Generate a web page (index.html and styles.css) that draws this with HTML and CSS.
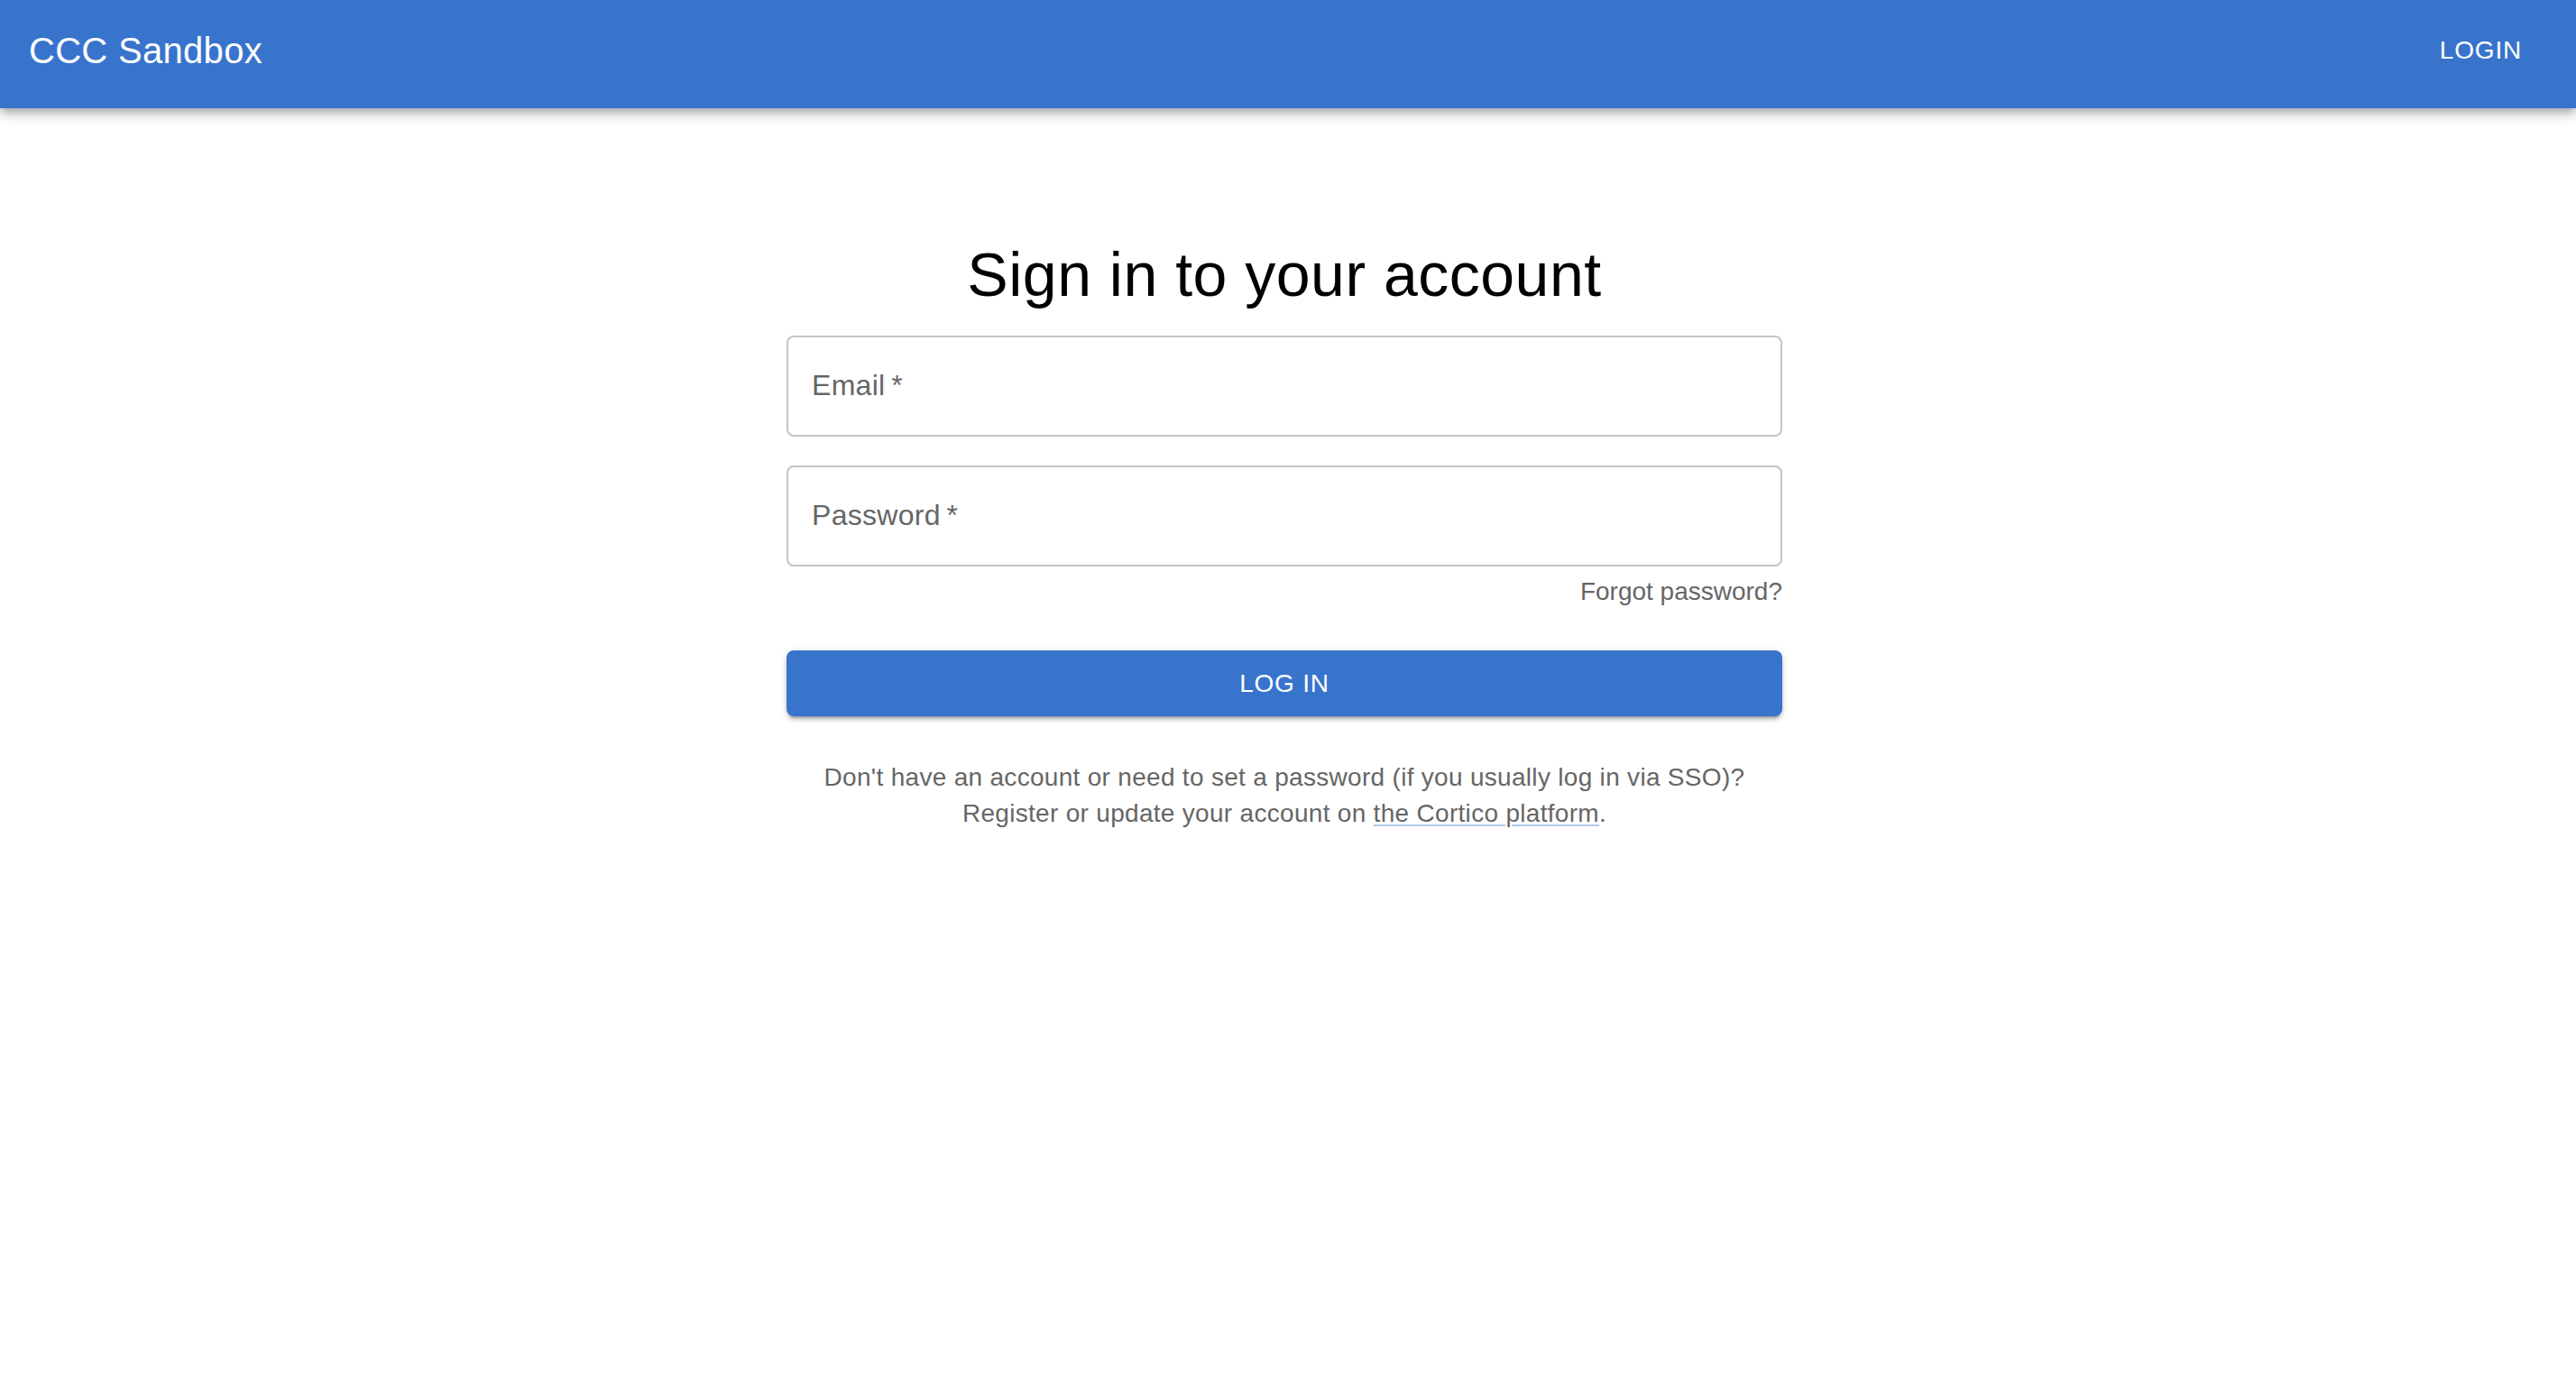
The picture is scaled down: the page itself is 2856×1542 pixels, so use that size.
FILE: index.html
```html
<!DOCTYPE html>
<html lang="en">
<head>
<meta charset="utf-8">
<title>CCC Sandbox</title>
<link rel="stylesheet" href="styles.css">
</head>
<body>
<header class="appbar">
  <div class="brand">CCC Sandbox</div>
  <a class="nav-login" href="#">LOGIN</a>
</header>
<main class="main">
  <form class="signin">
    <h1 class="title">Sign in to your account</h1>
    <div class="field field-email">
      <label class="field-label">Email&thinsp;*</label>
    </div>
    <div class="field field-password">
      <label class="field-label">Password&thinsp;*</label>
    </div>
    <div class="forgot-row"><a class="forgot" href="#">Forgot password?</a></div>
    <button class="submit" type="button">LOG IN</button>
    <p class="note">Don't have an account or need to set a password (if you usually log in via SSO)?<br>Register or update your account on <a class="note-link" href="#">the Cortico platform</a>.</p>
  </form>
</main>
</body>
</html>
```

FILE: styles.css
```css
html, body {
  margin: 0;
  padding: 0;
  background: #ffffff;
}

body {
  font-family: "Liberation Sans", Arial, Helvetica, sans-serif;
  color: #000;
}

.appbar {
  box-sizing: border-box;
  height: 120px;
  padding: 0 60px 8px 32px;
  background: #3874cc;
  color: #ffffff;
  display: flex;
  align-items: center;
  justify-content: space-between;
  box-shadow: 0 4px 8px -2px rgba(0,0,0,0.2), 0 8px 10px 0 rgba(0,0,0,0.14), 0 2px 20px 0 rgba(0,0,0,0.12);
  position: relative;
  z-index: 2;
}

.brand {
  font-size: 40px;
  line-height: normal;
  letter-spacing: 0.3px;
}

.nav-login {
  color: #ffffff;
  text-decoration: none;
  font-size: 28px;
  letter-spacing: 0.8px;
  line-height: normal;
}

.main {
  padding: 142px 8px 0 0;
}

.signin {
  width: 1104px;
  margin: 0 auto;
  display: flex;
  flex-direction: column;
}

.title {
  margin: 0 0 26px;
  font-size: 68px;
  line-height: 84px;
  font-weight: 400;
  letter-spacing: 0.5px;
  text-align: center;
  color: #000;
}

.field {
  box-sizing: border-box;
  height: 112px;
  border: 2px solid #c4c4c4;
  border-radius: 8px;
  display: flex;
  align-items: center;
  padding: 0 26px 2px;
}

.field-email {
  margin-bottom: 32px;
}

.field-password {
  padding-bottom: 1px;
}

.field-label {
  font-size: 32px;
  line-height: normal;
  letter-spacing: 0.3px;
  color: #666666;
}

.forgot-row {
  margin-top: 8px;
  text-align: right;
  font-size: 28px;
  line-height: 40px;
}

.forgot {
  color: #666666;
  text-decoration: none;
}

.submit {
  margin-top: 45px;
  height: 73px;
  border: none;
  border-radius: 8px;
  background: #3874cc;
  color: #ffffff;
  font-family: "Liberation Sans", Arial, Helvetica, sans-serif;
  font-size: 28px;
  letter-spacing: 0.8px;
  box-shadow: 0 6px 2px -4px rgba(0,0,0,0.2), 0 4px 4px 0 rgba(0,0,0,0.14), 0 2px 10px 0 rgba(0,0,0,0.12);
  cursor: pointer;
}

.note {
  margin: 48px 0 0;
  text-align: center;
  font-size: 28px;
  line-height: 40px;
  letter-spacing: 0.3px;
  color: #666666;
}

.note-link {
  color: #666666;
  text-decoration: underline;
  text-decoration-color: rgba(56,116,204,0.4);
  text-decoration-thickness: 2px;
  text-underline-offset: 3px;
}
```
